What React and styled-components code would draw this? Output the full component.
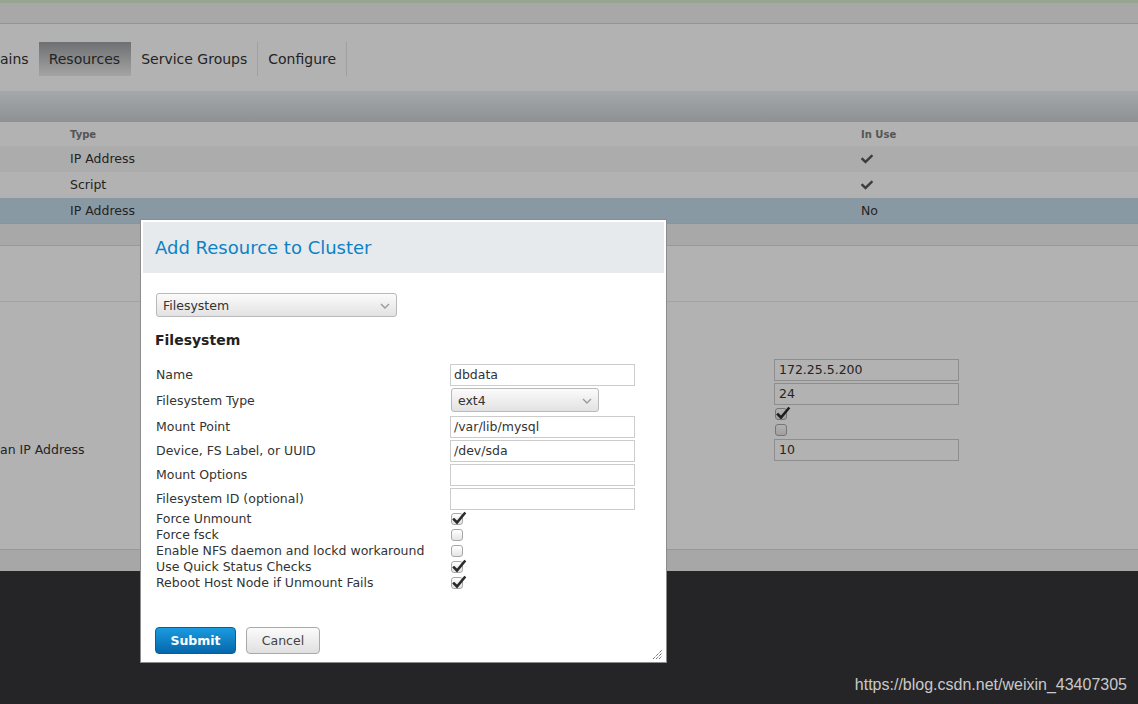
import React from 'react';
import styled, { createGlobalStyle } from 'styled-components';
import { FaCheck } from 'react-icons/fa';

const Global = createGlobalStyle`
  html, body { margin: 0; padding: 0; }
  body {
    font-family: "DejaVu Sans", Verdana, sans-serif;
    font-size: 12px;
    color: #333;
    overflow: hidden;
  }
  * { box-sizing: border-box; }
`;

const Page = styled.div`
  position: relative;
  min-height: 100vh;
  display: flex;
  flex-direction: column;
  background: #fff;
`;

const TopStrip = styled.div`
  height: 3px;
  background: #d6ecd0;
`;

const MastHead = styled.div`
  height: 21px;
  background: #f1f1f1;
  border-bottom: 1px solid #d4d4d4;
`;

const TabBar = styled.div`
  height: 67px;
  padding-top: 18px;
  background: #fff;
`;

const Tabs = styled.nav`
  display: flex;
  height: 34px;
`;

const Tab = styled.a`
  display: flex;
  align-items: center;
  padding: 0 ${p => (p.$cut ? '9px' : '10px')} 0 ${p => (p.$cut ? '0' : '10px')};
  font-size: 14px;
  color: #333;
  border-right: 1px solid ${p => (p.$sep ? '#e6e6e6' : 'transparent')};
  background: ${p => (p.$active ? 'linear-gradient(#9ea0a3, #ebebeb)' : 'transparent')};
`;

const SubBar = styled.div`
  height: 31px;
  background: linear-gradient(#ecf1f4, #cbd0d4);
`;

const Row = styled.div`
  display: grid;
  grid-template-columns: 70px 791px 1fr;
  align-items: center;
  height: ${p => p.$h || 26}px;
  padding-bottom: ${p => (p.$h ? 0 : 1)}px;
  background: ${p => p.$bg || '#fff'};
  border-bottom: ${p => (p.$line ? '1px solid #d2d2d2' : 'none')};
`;

const HeadCell = styled.div`
  font-size: 10px;
  font-weight: bold;
  color: #7a7a7a;
`;

const Cell = styled.div`
  font-size: 12.5px;
  color: #333;
  display: flex;
  align-items: center;
`;

const Band = styled.div`
  height: 22px;
  background: #f1f1f1;
  border-bottom: 1px solid #dcdcdc;
`;

const Section = styled.div`
  height: 56px;
  background: #fff;
  border-bottom: 1px solid #e2eded;
`;

const FormArea = styled.div`
  height: 248px;
  padding-top: 57px;
  background: #fff;
  border-bottom: 1px solid #dadada;
`;

const PropRow = styled.div`
  display: grid;
  grid-template-columns: 774px 185px;
  align-items: start;
  height: ${p => p.$h}px;
`;

const PropLabel = styled.div`
  font-size: 12.5px;
  line-height: ${p => p.$lh || 22}px;
  color: #333;
`;

const TextBox = styled.div`
  height: 22px;
  width: ${p => p.$w || 185}px;
  border: 1px solid ${p => p.$border || '#ccc'};
  background: #fff;
  font-size: 12.5px;
  line-height: 20px;
  padding-left: ${p => p.$pad ?? 3}px;
  color: #333;
  white-space: nowrap;
`;

const Footer = styled.div`
  height: 21px;
  background: #f0f0f0;
`;

const Dark = styled.div`
  flex: 1;
  background: #35363a;
`;

const Backdrop = styled.div`
  position: absolute;
  inset: 0;
  background: rgba(0, 0, 0, 0.3);
`;

const Watermark = styled.div`
  position: absolute;
  right: 11px;
  bottom: 10px;
  font-family: "Liberation Sans", Arial, sans-serif;
  font-size: 16px;
  color: #c9c9c9;
`;

const Modal = styled.div`
  position: absolute;
  left: 140px;
  top: 219px;
  width: 527px;
  height: 444px;
  background: #fff;
  border: 1px solid #8c8c8c;
  padding: 2px;
`;

const ModalHeader = styled.div`
  height: 51px;
  background: #e6eaed;
  display: flex;
  align-items: center;
  padding-left: 12px;
`;

const ModalTitle = styled.h3`
  margin: 0;
  font-size: 18px;
  font-weight: normal;
  color: #0c82c6;
`;

const ModalBody = styled.div`
  padding: 20px 13px 0;
`;

const SelectBox = styled.div`
  position: relative;
  width: ${p => p.$w}px;
  height: 24px;
  border: 1px solid #b9b9b9;
  border-radius: 3px;
  background: linear-gradient(#fbfbfb, #e2e2e2);
  font-size: 12.5px;
  line-height: 24px;
  padding-left: 6px;
  color: #333;
`;

const Chevron = styled.svg`
  position: absolute;
  right: 6px;
  top: 9px;
`;

const SectionTitle = styled.h4`
  margin: 15px 0 15px -1px;
  font-size: 14px;
  line-height: 17px;
  font-weight: bold;
  color: #222;
`;

const FieldRow = styled.div`
  display: grid;
  grid-template-columns: 294px 1fr;
  align-items: start;
  height: ${p => p.$h}px;
`;

const FieldLabel = styled.div`
  font-size: 12.5px;
  line-height: ${p => p.$lh}px;
  color: #333;
  white-space: nowrap;
`;

const BoxWrap = styled.span`
  display: inline-block;
  margin: ${p => p.$m || '2px 0 0 1px'};
  width: 12px;
  height: 12px;
  border: 1px solid #a8a8a8;
  border-radius: 3px;
  background: linear-gradient(#ffffff, #e4e4e4);
  position: relative;
`;

const Tick = styled.svg`
  position: absolute;
  left: 0px;
  top: -3px;
  overflow: visible;
`;

const Buttons = styled.div`
  display: flex;
  gap: 10px;
  margin-top: 36px;
  margin-left: -1px;
`;

const Button = styled.button`
  height: 27px;
  width: ${p => p.$w}px;
  border-radius: 4px;
  font-family: "DejaVu Sans", Verdana, sans-serif;
  font-size: 12.5px;
  font-weight: ${p => (p.$primary ? 'bold' : 'normal')};
  color: ${p => (p.$primary ? '#fff' : '#444')};
  border: 1px solid ${p => (p.$primary ? '#0a5d96' : '#a9a9a9')};
  background: ${p =>
    p.$primary ? 'linear-gradient(#1b9be0, #0567ab)' : 'linear-gradient(#fbfbfb, #e0e0e0)'};
  padding: 0 0 1px;
`;

const Grip = styled.svg`
  position: absolute;
  right: 3px;
  bottom: 2px;
`;

function Checkbox({ checked, m }) {
  return (
    <BoxWrap $m={m}>
      {checked && (
        <Tick width="14" height="14" viewBox="0 0 14 14">
          <path d="M2 8.5 L5 11.5 L12.5 2.5" fill="none" stroke="#2b2b2b" strokeWidth="2.6" strokeLinecap="square" />
        </Tick>
      )}
    </BoxWrap>
  );
}

function Select({ w, value }) {
  return (
    <SelectBox $w={w}>
      {value}
      <Chevron width="10" height="6" viewBox="0 0 10 6">
        <path d="M1 1 L5 5 L9 1" fill="none" stroke="#9a9a9a" strokeWidth="1.4" />
      </Chevron>
    </SelectBox>
  );
}

const fields = [
  { label: 'Name', type: 'text', value: 'dbdata', h: 24 },
  { label: 'Filesystem Type', type: 'select', value: 'ext4', h: 28 },
  { label: 'Mount Point', type: 'text', value: '/var/lib/mysql', h: 24 },
  { label: 'Device, FS Label, or UUID', type: 'text', value: '/dev/sda', h: 24 },
  { label: 'Mount Options', type: 'text', value: '', h: 24 },
  { label: 'Filesystem ID (optional)', type: 'text', value: '', h: 23 },
  { label: 'Force Unmount', type: 'check', value: true, h: 16 },
  { label: 'Force fsck', type: 'check', value: false, h: 16 },
  { label: 'Enable NFS daemon and lockd workaround', type: 'check', value: false, h: 16 },
  { label: 'Use Quick Status Checks', type: 'check', value: true, h: 16 },
  { label: 'Reboot Host Node if Unmount Fails', type: 'check', value: true, h: 16 },
];

const labelHeight = { check: 16, select: 26, text: 22 };

const resources = [
  { type: 'IP Address', used: true, bg: '#f7f7f7' },
  { type: 'Script', used: true, bg: '#fff' },
  { type: 'IP Address', used: false, bg: '#c5dcea', line: true },
];

export default function App() {
  return (
    <>
      <Global />
      <Page>
        <TopStrip />
        <MastHead />
        <TabBar>
          <Tabs>
            <Tab $cut>ains</Tab>
            <Tab $active>Resources</Tab>
            <Tab $sep>Service Groups</Tab>
            <Tab $sep>Configure</Tab>
          </Tabs>
        </TabBar>
        <SubBar />
        <Row $h={24}>
          <span />
          <HeadCell>Type</HeadCell>
          <HeadCell>In Use</HeadCell>
        </Row>
        {resources.map((r, i) => (
          <Row key={i} $bg={r.bg} $line={r.line}>
            <span />
            <Cell>{r.type}</Cell>
            <Cell>{r.used ? <FaCheck size={12} color="#575757" /> : 'No'}</Cell>
          </Row>
        ))}
        <Band />
        <Section />
        <FormArea>
          <PropRow $h={24}>
            <span />
            <TextBox $border="#cbcbcb" $pad={4}>172.25.5.200</TextBox>
          </PropRow>
          <PropRow $h={24}>
            <span />
            <TextBox $border="#cbcbcb" $pad={4}>24</TextBox>
          </PropRow>
          <PropRow $h={16}>
            <span />
            <Checkbox checked m="1px 0 0 1px" />
          </PropRow>
          <PropRow $h={16}>
            <span />
            <Checkbox m="1px 0 0 1px" />
          </PropRow>
          <PropRow $h={24}>
            <PropLabel>an IP Address</PropLabel>
            <TextBox $border="#cbcbcb" $pad={4}>10</TextBox>
          </PropRow>
        </FormArea>
        <Footer />
        <Dark />

        <Backdrop />

        <Modal>
          <ModalHeader>
            <ModalTitle>Add Resource to Cluster</ModalTitle>
          </ModalHeader>
          <ModalBody>
            <Select w={241} value="Filesystem" />
            <SectionTitle>Filesystem</SectionTitle>
            {fields.map(f => (
              <FieldRow key={f.label} $h={f.h}>
                <FieldLabel $lh={labelHeight[f.type]}>{f.label}</FieldLabel>
                {f.type === 'text' && <TextBox>{f.value}</TextBox>}
                {f.type === 'select' && (
                  <div style={{ marginLeft: 1 }}>
                    <Select w={148} value={f.value} />
                  </div>
                )}
                {f.type === 'check' && <Checkbox checked={f.value} />}
              </FieldRow>
            ))}
            <Buttons>
              <Button $primary $w={81}>Submit</Button>
              <Button $w={74}>Cancel</Button>
            </Buttons>
          </ModalBody>
          <Grip width="11" height="11" viewBox="0 0 11 11">
            <path d="M1 10 L10 1 M4 10 L10 4 M7 10 L10 7" stroke="#333" strokeWidth="1" strokeDasharray="1 1" />
          </Grip>
        </Modal>
        <Watermark>https://blog.csdn.net/weixin_43407305</Watermark>
      </Page>
    </>
  );
}
